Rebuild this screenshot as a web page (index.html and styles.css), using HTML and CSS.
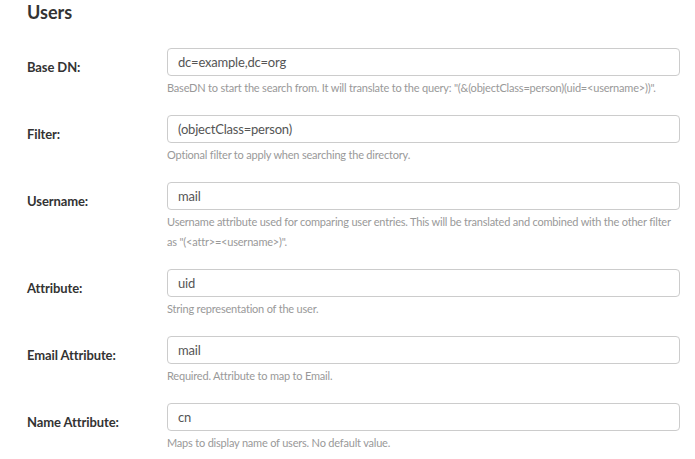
FILE: index.html
```html
<!DOCTYPE html>
<html>
<head>
<meta charset="utf-8">
<link rel="stylesheet" href="styles.css">
</head>
<body>
<div class="page">
  <h2 class="title">Users</h2>
  <div class="form">
    <div class="row">
      <label class="label">Base DN:</label>
      <div class="field">
        <input class="input" type="text" value="dc=example,dc=org">
        <div class="help">BaseDN to start the search from. It will translate to the query: "(&amp;(objectClass=person)(uid=&lt;username&gt;))".</div>
      </div>
    </div>
    <div class="row">
      <label class="label">Filter:</label>
      <div class="field">
        <input class="input" type="text" value="(objectClass=person)">
        <div class="help">Optional filter to apply when searching the directory.</div>
      </div>
    </div>
    <div class="row">
      <label class="label">Username:</label>
      <div class="field">
        <input class="input" type="text" value="mail">
        <div class="help">Username attribute used for comparing user entries. This will be translated and combined with the other filter as "(&lt;attr&gt;=&lt;username&gt;)".</div>
      </div>
    </div>
    <div class="row">
      <label class="label">Attribute:</label>
      <div class="field">
        <input class="input" type="text" value="uid">
        <div class="help">String representation of the user.</div>
      </div>
    </div>
    <div class="row">
      <label class="label">Email Attribute:</label>
      <div class="field">
        <input class="input" type="text" value="mail">
        <div class="help">Required. Attribute to map to Email.</div>
      </div>
    </div>
    <div class="row">
      <label class="label">Name Attribute:</label>
      <div class="field">
        <input class="input" type="text" value="cn">
        <div class="help">Maps to display name of users. No default value.</div>
      </div>
    </div>
  </div>
</div>
</body>
</html>
```
FILE: styles.css
```css
html, body {
  margin: 0;
  padding: 0;
  background: #ffffff;
}
body {
  font-family: Lato, "Open Sans", sans-serif;
  color: #333333;
}
.page {
  padding: 0 15px 0 27px;
}
.title {
  margin: 0;
  padding-top: 1px;
  font-size: 18px;
  line-height: 22px;
  font-weight: 700;
  color: #333333;
  height: 47px;
}
.form {
  display: flex;
  flex-direction: column;
}
.row {
  display: grid;
  grid-template-columns: 140px 513px;
  margin-bottom: 17px;
}
.label {
  font-size: 13px;
  font-weight: 700;
  line-height: 20px;
  padding-top: 9px;
  color: #333333;
  letter-spacing: -0.1px;
}
.field {
  display: flex;
  flex-direction: column;
}
.input {
  box-sizing: border-box;
  height: 28px;
  width: 513px;
  margin: 0;
  padding: 0 10px;
  border: 1px solid #cccccc;
  border-radius: 4px;
  font-family: Lato, "Open Sans", sans-serif;
  font-size: 13px;
  letter-spacing: -0.2px;
  color: #555555;
  background: #ffffff;
  outline: none;
}
.help {
  margin-top: 2px;
  font-size: 11px;
  letter-spacing: -0.2px;
  line-height: 20px;
  color: #999999;
}
```
